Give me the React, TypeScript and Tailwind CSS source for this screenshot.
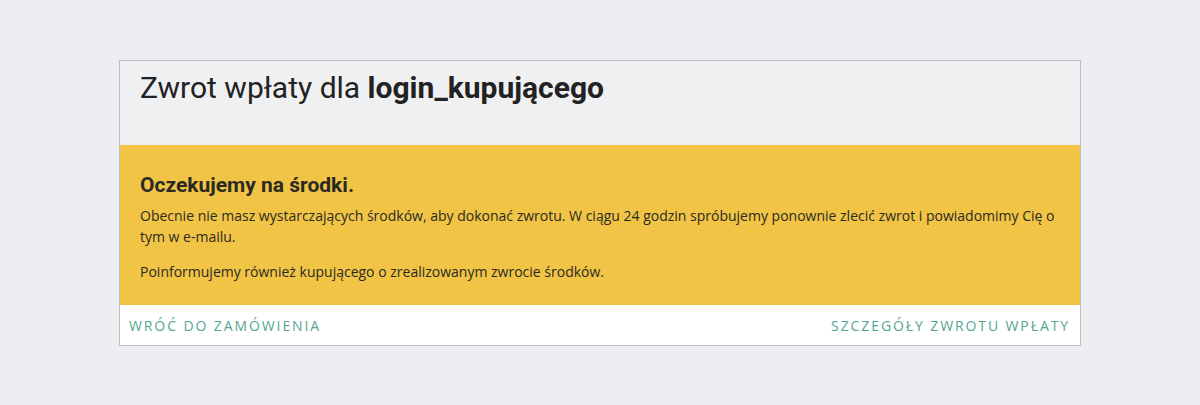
export default function App() {
  return (
    <div className="min-h-[405px] w-full bg-[#eceef1] pt-[60px]">
      <div className="mx-auto w-[962px] border border-[#bdbec1] bg-white">
        {/* header */}
        <div className="h-[84px] bg-[#eff0f2] px-5 pt-[8px]">
          <h1 className="text-[30px] leading-[38px] text-[#222] font-['Roboto',sans-serif]">
            Zwrot wpłaty dla <span className="font-bold">login_kupującego</span>
          </h1>
        </div>
        {/* notice */}
        <div className="bg-[#f1c446] pl-5 pr-4 pt-[27px] pb-[23px] text-[#2a2a22]">
          <h2 className="mb-[7px] text-[21px] font-bold leading-[26px] font-['Roboto',sans-serif]">
            Oczekujemy na środki.
          </h2>
          <p className="text-[14px] leading-[21px] font-['Open_Sans',sans-serif]">
            Obecnie nie masz wystarczających środków, aby dokonać zwrotu. W ciągu 24 godzin spróbujemy ponownie zlecić zwrot i
            powiadomimy Cię o tym w e-mailu.
          </p>
          <p className="mt-[14px] text-[14px] leading-[21px] font-['Open_Sans',sans-serif]">
            Poinformujemy również kupującego o zrealizowanym zwrocie środków.
          </p>
        </div>
        {/* footer links */}
        <div className="flex h-[40px] items-center justify-between pl-[9px] pr-[10px] font-['Open_Sans',sans-serif] text-[14px] tracking-[1.9px] text-[#56a593]">
          <a href="#">WRÓĆ DO ZAMÓWIENIA</a>
          <a href="#">SZCZEGÓŁY ZWROTU WPŁATY</a>
        </div>
      </div>
    </div>
  )
}
